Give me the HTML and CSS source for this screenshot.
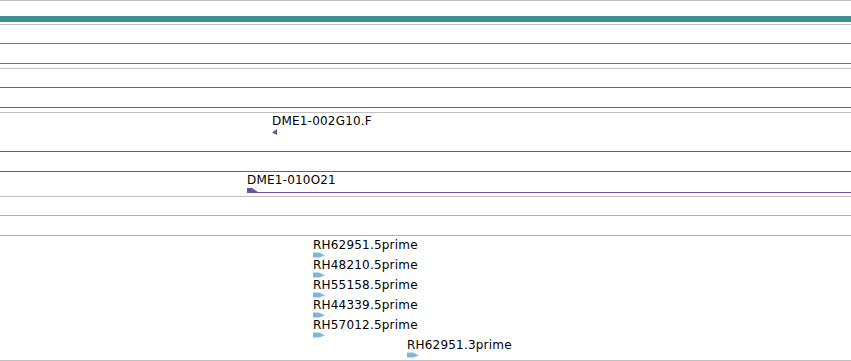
FILE: index.html
```html
<!DOCTYPE html>
<html lang="en">
<head>
  <meta charset="UTF-8" />
  <title>Track view</title>
  <link rel="stylesheet" href="styles.css">
</head>
<body>

<div class="lane edge"></div>

<!-- ruler -->
<div class="lane ruler-lane">
  <div class="ruler"></div>
</div>

<!-- empty tracks -->
<div class="lane h18 teal"></div>
<div class="lane h19 teal"></div>
<div class="lane h4"></div>

<div class="lane h18 blue"></div>
<div class="lane h19 blue"></div>
<div class="lane h4"></div>

<!-- clone ends -->
<div class="lane clone-top purple">
  <div class="feature pad-2" style="margin-left: 272px">
    <div class="label">DME1-002G10.F</div>
    <svg class="glyph" width="6" height="6" viewBox="0 0 6 6">
      <polygon points="0,3.5 5,0 5,6" fill="#6a52a3"/>
    </svg>
  </div>
</div>
<div class="lane h19 purple"></div>
<div class="lane clone-bottom">
  <div class="feature pad-2" style="margin-left: 247px">
    <div class="label">DME1-010O21</div>
    <div class="span-row">
      <svg width="11" height="5" viewBox="0 0 11 5">
        <polygon points="0,0 5,0 11,4 11,5 0,5" fill="#6a52a3"/>
      </svg>
      <div class="span-line"></div>
    </div>
  </div>
</div>

<!-- ESTs -->
<div class="lane h18 light"></div>
<div class="lane h19 light"></div>
<div class="lane est">
  <div class="feature" style="margin-left: 313px">
    <div class="label">RH62951.5prime</div>
    <svg class="glyph est-arrow" width="12" height="6" viewBox="0 0 12 6"><polygon points="0,0 6,0 12,3 6,5 0,5" fill="#7fb5dc"/></svg>
  </div>
  <div class="feature" style="margin-left: 313px">
    <div class="label">RH48210.5prime</div>
    <svg class="glyph est-arrow" width="12" height="6" viewBox="0 0 12 6"><polygon points="0,0 6,0 12,3 6,5 0,5" fill="#7fb5dc"/></svg>
  </div>
  <div class="feature" style="margin-left: 313px">
    <div class="label">RH55158.5prime</div>
    <svg class="glyph est-arrow" width="12" height="6" viewBox="0 0 12 6"><polygon points="0,0 6,0 12,3 6,5 0,5" fill="#7fb5dc"/></svg>
  </div>
  <div class="feature" style="margin-left: 313px">
    <div class="label">RH44339.5prime</div>
    <svg class="glyph est-arrow" width="12" height="6" viewBox="0 0 12 6"><polygon points="0,0 6,0 12,3 6,5 0,5" fill="#7fb5dc"/></svg>
  </div>
  <div class="feature" style="margin-left: 313px">
    <div class="label">RH57012.5prime</div>
    <svg class="glyph est-arrow" width="12" height="6" viewBox="0 0 12 6"><polygon points="0,0 6,0 12,3 6,5 0,5" fill="#7fb5dc"/></svg>
  </div>
  <div class="feature" style="margin-left: 407px">
    <div class="label">RH62951.3prime</div>
    <svg class="glyph est-arrow" width="12" height="6" viewBox="0 0 12 6"><polygon points="0,0 6,0 12,3 6,5 0,5" fill="#7fb5dc"/></svg>
  </div>
</div>

</body>
</html>
```

FILE: styles.css
```css
* { box-sizing: content-box; }
body {
  margin: 0;
  background: #fff;
  color: #000;
  font-family: 'DejaVu Sans', sans-serif;
  font-size: 12px;
  overflow: hidden;
}

.lane {
  border-bottom: 1px solid #c0c0c0;
}

.edge { height: 0; }
.h4 { height: 4px; }
.h18 { height: 18px; }
.h19 { height: 19px; }

.teal { border-bottom-color: #2a8db0; }
.blue { border-bottom-color: #3d6bbf; }
.purple { border-bottom-color: #6a52a3; }
.light { border-bottom-color: #8dbcdc; }

.ruler-lane {
  height: 8px;
  padding-top: 15px;
}
.ruler {
  height: 6px;
  background: #3e9090;
}

.clone-top { height: 38px; }
.clone-bottom { height: 24px; }
.est {
  height: 121px;
  padding-top: 3px;
}

.pad-2 { padding-top: 2px; }

.label {
  line-height: 13px;
  letter-spacing: 0.2px;
  white-space: nowrap;
}

.glyph {
  display: block;
  margin-top: 1px;
}

.est-arrow {
  margin-top: 0;
  height: 7px;
}

.span-row {
  display: flex;
  align-items: flex-end;
  margin-top: 1px;
}

.span-line {
  flex: 1;
  height: 0;
  border-bottom: 1px solid #6a52a3;
}
```
